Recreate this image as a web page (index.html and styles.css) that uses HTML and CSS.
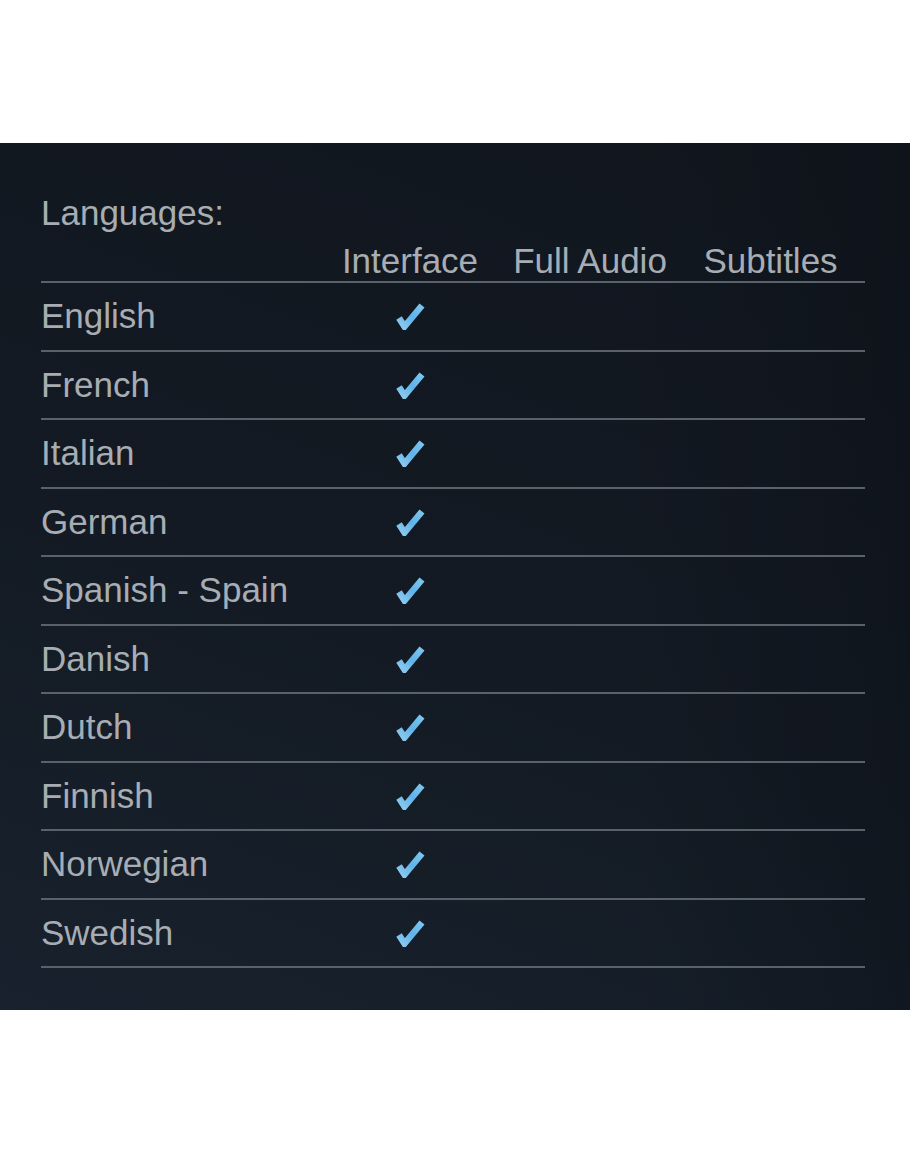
FILE: index.html
```html
<!DOCTYPE html>
<html lang="en">
<head>
<meta charset="utf-8">
<title>Languages</title>
<link rel="stylesheet" href="styles.css">
</head>
<body>
<section class="panel">
  <div class="title">Languages:</div>
  <div class="lang-table">
    <div class="row head">
      <div class="cell name"></div>
      <div class="cell col">Interface</div>
      <div class="cell col">Full Audio</div>
      <div class="cell col">Subtitles</div>
      <div class="cell"></div>
    </div>
    <div class="row"><div class="cell name">English</div><div class="cell col"><svg class="check" viewBox="0 0 30 28"><defs><linearGradient id="g" x1="0" y1="1" x2="1" y2="0"><stop offset="0" stop-color="#8fcbef"/><stop offset="0.5" stop-color="#5fb3ea"/><stop offset="1" stop-color="#7cc6ee"/></linearGradient></defs><polyline points="4,16 9.5,24.5 27,3.5" fill="none" stroke="url(#g)" stroke-width="6.5"/></svg></div><div class="cell col"></div><div class="cell col"></div><div class="cell"></div></div>
    <div class="row"><div class="cell name">French</div><div class="cell col"><svg class="check" viewBox="0 0 30 28"><polyline points="4,16 9.5,24.5 27,3.5" fill="none" stroke="url(#g)" stroke-width="6.5"/></svg></div><div class="cell col"></div><div class="cell col"></div><div class="cell"></div></div>
    <div class="row"><div class="cell name">Italian</div><div class="cell col"><svg class="check" viewBox="0 0 30 28"><polyline points="4,16 9.5,24.5 27,3.5" fill="none" stroke="url(#g)" stroke-width="6.5"/></svg></div><div class="cell col"></div><div class="cell col"></div><div class="cell"></div></div>
    <div class="row"><div class="cell name">German</div><div class="cell col"><svg class="check" viewBox="0 0 30 28"><polyline points="4,16 9.5,24.5 27,3.5" fill="none" stroke="url(#g)" stroke-width="6.5"/></svg></div><div class="cell col"></div><div class="cell col"></div><div class="cell"></div></div>
    <div class="row"><div class="cell name">Spanish - Spain</div><div class="cell col"><svg class="check" viewBox="0 0 30 28"><polyline points="4,16 9.5,24.5 27,3.5" fill="none" stroke="url(#g)" stroke-width="6.5"/></svg></div><div class="cell col"></div><div class="cell col"></div><div class="cell"></div></div>
    <div class="row"><div class="cell name">Danish</div><div class="cell col"><svg class="check" viewBox="0 0 30 28"><polyline points="4,16 9.5,24.5 27,3.5" fill="none" stroke="url(#g)" stroke-width="6.5"/></svg></div><div class="cell col"></div><div class="cell col"></div><div class="cell"></div></div>
    <div class="row"><div class="cell name">Dutch</div><div class="cell col"><svg class="check" viewBox="0 0 30 28"><polyline points="4,16 9.5,24.5 27,3.5" fill="none" stroke="url(#g)" stroke-width="6.5"/></svg></div><div class="cell col"></div><div class="cell col"></div><div class="cell"></div></div>
    <div class="row"><div class="cell name">Finnish</div><div class="cell col"><svg class="check" viewBox="0 0 30 28"><polyline points="4,16 9.5,24.5 27,3.5" fill="none" stroke="url(#g)" stroke-width="6.5"/></svg></div><div class="cell col"></div><div class="cell col"></div><div class="cell"></div></div>
    <div class="row"><div class="cell name">Norwegian</div><div class="cell col"><svg class="check" viewBox="0 0 30 28"><polyline points="4,16 9.5,24.5 27,3.5" fill="none" stroke="url(#g)" stroke-width="6.5"/></svg></div><div class="cell col"></div><div class="cell col"></div><div class="cell"></div></div>
    <div class="row"><div class="cell name">Swedish</div><div class="cell col"><svg class="check" viewBox="0 0 30 28"><polyline points="4,16 9.5,24.5 27,3.5" fill="none" stroke="url(#g)" stroke-width="6.5"/></svg></div><div class="cell col"></div><div class="cell col"></div><div class="cell"></div></div>
  </div>
</section>
</body>
</html>
```

FILE: styles.css
```css
html, body {
  margin: 0;
  padding: 0;
  background: #ffffff;
}

.panel {
  margin-top: 143px;
  height: 867px;
  box-sizing: border-box;
  padding: 50px 45px 0 41px;
  background:
    linear-gradient(90deg, rgba(10, 14, 20, 0) 70%, rgba(10, 14, 20, 0.35) 100%),
    linear-gradient(20deg, #18212d 0%, #131a23 45%, #11161e 100%);
  font-family: "Liberation Sans", Arial, sans-serif;
  font-size: 35px;
  line-height: 40px;
  color: #a7adb3;
}

.title {
  height: 40px;
  margin-bottom: 8px;
}

.lang-table {
  display: flex;
  flex-direction: column;
}

.row {
  display: grid;
  grid-template-columns: 289px 160px 200px 161px 1fr;
  align-items: center;
  height: 68.5px;
  box-sizing: border-box;
  border-bottom: 2px solid #59616b;
}

.row.head {
  height: 42px;
  align-items: start;
}

.cell {
  white-space: nowrap;
}

.col {
  text-align: center;
  display: flex;
  justify-content: center;
  align-items: center;
}

.head .col {
  display: block;
}

.check {
  width: 30px;
  height: 28px;
  display: block;
}
```
